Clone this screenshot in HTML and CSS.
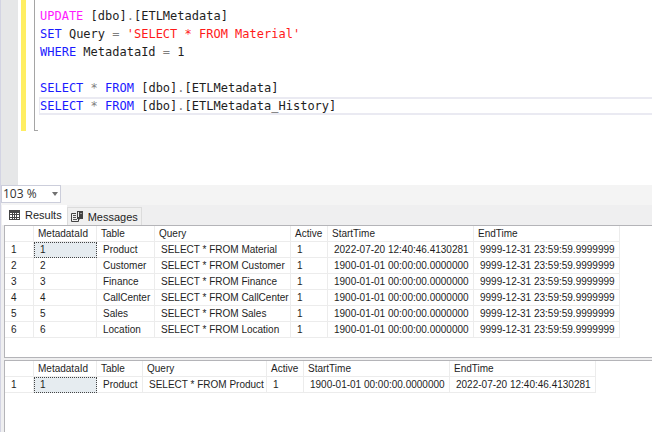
FILE: index.html
```html
<!DOCTYPE html>
<html lang="en">
<head>
  <meta charset="UTF-8" />
  <meta name="viewport" content="width=device-width, initial-scale=1.0" />
  <title>SQL Query</title>
  <link rel="stylesheet" href="styles.css">
</head>
<body>
  <div class="window">
    <div class="editor">
      <div class="margin"></div>
      <div class="changes"></div>
      <div class="outline"></div>
      <div class="code">
        <div class="line"><span class="fn">UPDATE</span> [dbo]<span class="op">.</span>[ETLMetadata]</div>
        <div class="line"><span class="kw">SET</span> Query <span class="op">=</span> <span class="str">'SELECT * FROM Material'</span></div>
        <div class="line"><span class="kw">WHERE</span> MetadataId <span class="op">=</span> 1</div>
        <div class="line"></div>
        <div class="line"><span class="kw">SELECT</span> <span class="op">*</span> <span class="kw">FROM</span> [dbo]<span class="op">.</span>[ETLMetadata]</div>
        <div class="line current"><span class="kw">SELECT</span> <span class="op">*</span> <span class="kw">FROM</span> [dbo]<span class="op">.</span>[ETLMetadata_History]</div>
      </div>
    </div>

    <div class="zoom-bar">
      <select class="zoom" aria-label="Zoom">
        <option>103 %</option>
      </select>
      <svg class="arrow" width="6" height="4" viewBox="0 0 6 4"><path d="M0 0h6L3 4z" fill="#717171"/></svg>
    </div>

    <div class="tabs">
      <button class="tab active" type="button">
        <svg width="11" height="10" viewBox="0 0 11 10">
          <path d="M0 0h11v10H0z" fill="#444"/>
          <path d="M1 3h2v1H1zM4 3h1v1H4zM6 3h1v1H6zM8 3h2v1H8zM1 5h2v2H1zM4 5h1v2H4zM6 5h1v2H6zM8 5h2v2H8zM1 8h2v1H1zM4 8h1v1H4zM6 8h1v1H6zM8 8h2v1H8z" fill="#fff"/>
        </svg>
        Results
      </button>
      <button class="tab" type="button">
        <svg width="12" height="12" viewBox="0 0 12 12">
          <path d="M5 2.5H.5v8h7V8" fill="none" stroke="#444"/>
          <path d="M2 4.5h3M2 6.5h3M2 8.5h4" stroke="#555"/>
          <path d="M6 0h6v8H9L7 10V8H6z" fill="#444"/>
          <path d="M7 1h1v5H7z" fill="#eee"/>
          <path d="M9 2h2v1H9z" fill="#999"/>
        </svg>
        Messages
      </button>
    </div>

    <div class="results">
      <div class="pane first">
        <table class="grid">
          <colgroup><col class="num"><col class="id"><col class="name"><col class="query"><col class="flag"><col class="time"><col class="time"></colgroup>
          <thead>
            <tr><th></th><th>MetadataId</th><th>Table</th><th>Query</th><th>Active</th><th>StartTime</th><th>EndTime</th></tr>
          </thead>
          <tbody>
            <tr><th>1</th><td class="selected">1</td><td>Product</td><td>SELECT * FROM Material</td><td>1</td><td>2022-07-20 12:40:46.4130281</td><td>9999-12-31 23:59:59.9999999</td></tr>
            <tr><th>2</th><td>2</td><td>Customer</td><td>SELECT * FROM Customer</td><td>1</td><td>1900-01-01 00:00:00.0000000</td><td>9999-12-31 23:59:59.9999999</td></tr>
            <tr><th>3</th><td>3</td><td>Finance</td><td>SELECT * FROM Finance</td><td>1</td><td>1900-01-01 00:00:00.0000000</td><td>9999-12-31 23:59:59.9999999</td></tr>
            <tr><th>4</th><td>4</td><td>CallCenter</td><td>SELECT * FROM CallCenter</td><td>1</td><td>1900-01-01 00:00:00.0000000</td><td>9999-12-31 23:59:59.9999999</td></tr>
            <tr><th>5</th><td>5</td><td>Sales</td><td>SELECT * FROM Sales</td><td>1</td><td>1900-01-01 00:00:00.0000000</td><td>9999-12-31 23:59:59.9999999</td></tr>
            <tr><th>6</th><td>6</td><td>Location</td><td>SELECT * FROM Location</td><td>1</td><td>1900-01-01 00:00:00.0000000</td><td>9999-12-31 23:59:59.9999999</td></tr>
          </tbody>
        </table>
      </div>
      <div class="pane last">
        <table class="grid">
          <colgroup><col class="num"><col class="id"><col class="name-short"><col class="query-short"><col class="flag"><col class="time"><col class="time"></colgroup>
          <thead>
            <tr><th></th><th>MetadataId</th><th>Table</th><th>Query</th><th>Active</th><th>StartTime</th><th>EndTime</th></tr>
          </thead>
          <tbody>
            <tr><th>1</th><td class="selected">1</td><td>Product</td><td>SELECT * FROM Product</td><td>1</td><td>1900-01-01 00:00:00.0000000</td><td>2022-07-20 12:40:46.4130281</td></tr>
          </tbody>
        </table>
      </div>
    </div>
  </div>
</body>
</html>
```
FILE: styles.css
```css
* {
  box-sizing: border-box;
}
body {
  margin: 0;
  background: #efeff0;
  color: #1e1e1e;
  font-family: "Liberation Sans", Arial, sans-serif;
}
.window {
  display: flex;
  flex-direction: column;
  min-height: 100vh;
  border-left: 1px solid #d3d4e3;
  overflow: hidden;
}

/* query editor */
.editor {
  display: flex;
  background: #fff;
  padding-bottom: 54px;
}
.margin {
  width: 17px;
  background: #e6e7e8;
  margin-bottom: -54px;
}
.changes {
  width: 5px;
  margin-left: 3px;
  background: #ffee62;
}
.outline {
  width: 4px;
  margin-left: 8px;
  border-left: 1px solid #a5a5a5;
  border-bottom: 1px solid #a5a5a5;
}
.code {
  flex: 1;
  margin-left: 1px;
  padding: 7px 0 16px;
  font-family: "DejaVu Sans Mono", monospace;
  font-size: 12px;
}
.line {
  height: 18px;
  line-height: 18px;
  padding-left: 1px;
  white-space: pre;
}
.current {
  line-height: 14px;
  border: 2px solid #eaeaf2;
  border-right: none;
  border-left-width: 1px;
  padding-left: 0;
}
.kw {
  color: #1a1aff;
}
.fn {
  color: #ff1aff;
}
.str {
  color: #ff1a1a;
}
.op {
  color: #808080;
}

/* zoom drop-down */
.zoom-bar {
  display: flex;
  align-items: center;
  height: 20px;
  padding-bottom: 2px;
  background: #f4f4f4;
}
.zoom {
  appearance: none;
  width: 60px;
  height: 18px;
  padding: 0 1px;
  border: 1px solid #cccedb;
  border-radius: 0;
  background: #fff;
  color: #333;
  font-family: "Open Sans", sans-serif;
  font-size: 12px;
  line-height: 16px;
}
.arrow {
  margin-left: -9px;
  pointer-events: none;
}

/* result tabs */
.tabs {
  display: flex;
  align-items: flex-end;
  height: 20px;
  padding-left: 1px;
}
.tab {
  display: flex;
  align-items: center;
  gap: 5px;
  height: 18px;
  padding: 0 3px;
  border: 1px solid #dcdcdc;
  border-bottom: none;
  background: #f0f0f0;
  color: #1e1e1e;
  font-family: inherit;
  font-size: 11px;
}
.active {
  height: 20px;
  padding: 0 4px 2px 6px;
  border-color: #fff;
  background: #fff;
}

/* result grids */
.results {
  display: flex;
  flex-direction: column;
  flex: 1;
  padding-left: 3px;
}
.pane {
  background: #fff;
  border-left: 1px solid #b4b4b8;
  border-top: 1px solid #b4b4b8;
}
.first {
  padding-bottom: 19px;
  border-bottom: 1px solid #b4b4b8;
  margin-bottom: 2px;
}
.last {
  flex: 1;
}
.grid {
  width: min-content;
  table-layout: fixed;
  border-collapse: separate;
  border-spacing: 0;
  font-size: 10px;
  line-height: 14px;
  white-space: nowrap;
}
.grid th,
.grid td {
  height: 16px;
  padding: 1px 0 0 6px;
  border-right: 1px solid #ececec;
  border-bottom: 1px solid #ececec;
  font-weight: normal;
  text-align: left;
}
.grid thead th {
  padding-left: 4px;
}
.grid .selected {
  padding: 0 0 0 5px;
  border: 1px dotted #444;
  background: #e6ecf0;
}
.num {
  width: 29px;
}
.id {
  width: 63px;
}
.name {
  width: 58px;
}
.query {
  width: 136px;
}
.name-short {
  width: 46px;
}
.query-short {
  width: 124px;
}
.flag {
  width: 37px;
}
.time {
  width: 146px;
}
```
